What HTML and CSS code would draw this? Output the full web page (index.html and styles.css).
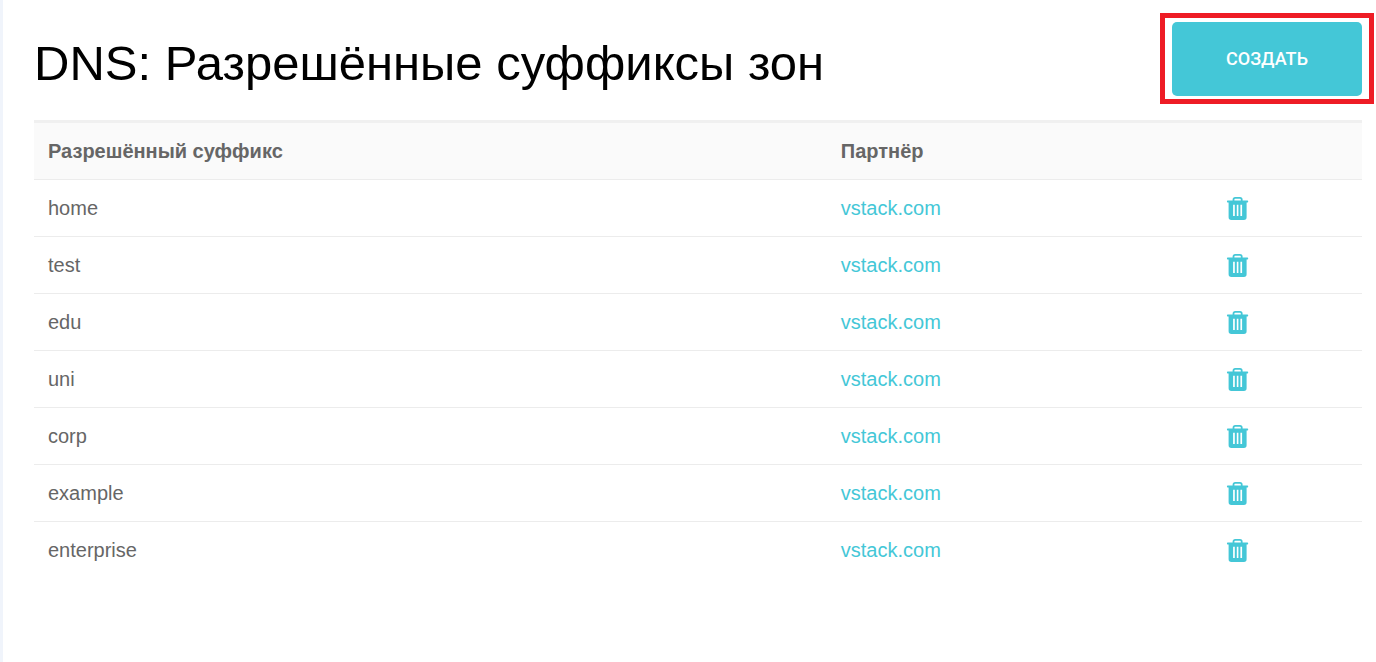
FILE: index.html
```html
<!DOCTYPE html>
<html lang="ru">
<head>
<meta charset="utf-8">
<meta name="viewport" content="width=device-width, initial-scale=1">
<title>DNS: Разрешённые суффиксы зон</title>
<link rel="stylesheet" href="styles.css">
</head>
<body>
<svg class="sprite" aria-hidden="true">
  <symbol id="trash" viewBox="0 0 23 24">
    <path fill="none" stroke="currentColor" stroke-width="1.800" d="M7.500 5V3.600Q7.500 1.900 9.200 1.900h4.800q1.700 0 1.700 1.700V5"/>
    <path fill="currentColor" fill-rule="evenodd" d="M1.700 4.400h19.700q.8 0 .8 1.100t-.8 1.100h-.8V21.300q0 2.700-2.700 2.700H5.300q-2.700 0-2.700-2.700V6.600h-.9q-.8 0-.8-1.100t.8-1.100zM7.100 8.800v11.200h1.700v-11.200zM10.800 8.800v11.200h1.600v-11.200zM14.400 8.800v11.200h1.700v-11.200z"/>
  </symbol>
</svg>
<main class="page">
  <header class="page-header">
    <h1 class="page-title">DNS: Разрешённые суффиксы зон</h1>
    <div class="highlight"><button class="create-button" type="button">СОЗДАТЬ</button></div>
  </header>
  <table class="zones">
    <colgroup><col class="col-suffix"><col class="col-partner"><col class="col-actions"></colgroup>
    <thead>
      <tr><th scope="col">Разрешённый суффикс</th><th scope="col">Партнёр</th><td></td></tr>
    </thead>
    <tbody>
      <tr><td>home</td><td><a href="#">vstack.com</a></td><td><button class="delete" type="button" aria-label="Удалить home"><svg class="icon"><use href="#trash"/></svg></button></td></tr>
      <tr><td>test</td><td><a href="#">vstack.com</a></td><td><button class="delete" type="button" aria-label="Удалить test"><svg class="icon"><use href="#trash"/></svg></button></td></tr>
      <tr><td>edu</td><td><a href="#">vstack.com</a></td><td><button class="delete" type="button" aria-label="Удалить edu"><svg class="icon"><use href="#trash"/></svg></button></td></tr>
      <tr><td>uni</td><td><a href="#">vstack.com</a></td><td><button class="delete" type="button" aria-label="Удалить uni"><svg class="icon"><use href="#trash"/></svg></button></td></tr>
      <tr><td>corp</td><td><a href="#">vstack.com</a></td><td><button class="delete" type="button" aria-label="Удалить corp"><svg class="icon"><use href="#trash"/></svg></button></td></tr>
      <tr><td>example</td><td><a href="#">vstack.com</a></td><td><button class="delete" type="button" aria-label="Удалить example"><svg class="icon"><use href="#trash"/></svg></button></td></tr>
      <tr><td>enterprise</td><td><a href="#">vstack.com</a></td><td><button class="delete" type="button" aria-label="Удалить enterprise"><svg class="icon"><use href="#trash"/></svg></button></td></tr>
    </tbody>
  </table>
</main>
</body>
</html>
```
FILE: styles.css
```css
* {
  box-sizing: border-box;
}

body {
  margin: 0;
  background: #fff;
  color: #666;
  font: 20px/24px "Liberation Sans", Arial, sans-serif;
}

.sprite {
  display: none;
}

.page {
  min-height: 100vh;
  padding: 22px 14px 22px 31px;
  border-left: 3px solid #f0f4fb;
}

.page-header {
  display: flex;
  align-items: center;
  justify-content: space-between;
  gap: 24px;
  margin-bottom: 24px;
}

.page-title {
  margin: 0;
  padding-top: 8px;
  color: #000;
  font-size: 49px;
  font-weight: 400;
  line-height: 56px;
}

.highlight {
  position: relative;
}

.highlight::after {
  content: "";
  position: absolute;
  inset: -9px -12px -8px;
  border: 5px solid #ee1c25;
  pointer-events: none;
}

.create-button {
  display: block;
  min-width: 190px;
  padding: 25px 52px;
  border: 0;
  border-radius: 5px;
  background: #44c7d7;
  color: #fff;
  font: 500 18px/24px Roboto, sans-serif;
  white-space: nowrap;
}

.zones {
  width: 100%;
  table-layout: fixed;
  border-collapse: separate;
  border-spacing: 0;
  border-top: 3px solid #f0f0f0;
}

.col-suffix {
  width: 59.7%;
}

.col-partner {
  width: 29%;
}

.zones th,
.zones td {
  padding: 16px 14px;
  border-bottom: 1px solid #ececec;
  text-align: left;
  vertical-align: middle;
}

.zones thead {
  background: #fafafa;
}

.zones tbody tr:last-child td {
  border-bottom: 0;
}

.zones a {
  color: #44c7d7;
  text-decoration: none;
}

.delete {
  display: block;
  padding: 0;
  border: 0;
  background: none;
  color: #44c7d7;
}

.icon {
  display: block;
  width: 23px;
  height: 24px;
}
```
